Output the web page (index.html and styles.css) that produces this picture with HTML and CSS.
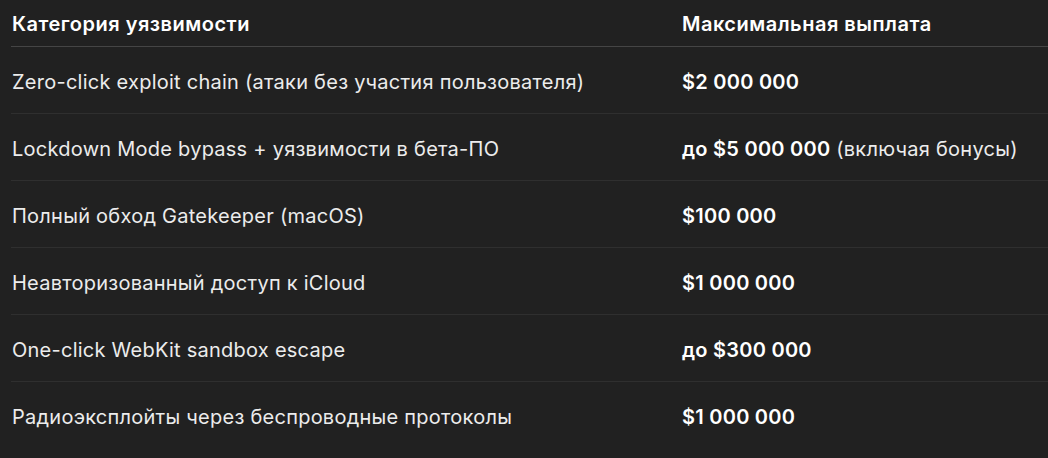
FILE: index.html
```html
<!DOCTYPE html>
<html lang="ru">
<head>
<meta charset="utf-8">
<link rel="stylesheet" href="styles.css">
</head>
<body>
<div class="table">
  <div class="row head">
    <div class="cell c1">Категория уязвимости</div>
    <div class="cell c2">Максимальная выплата</div>
  </div>
  <div class="row">
    <div class="cell c1">Zero-click exploit chain (атаки без участия пользователя)</div>
    <div class="cell c2"><b>$2 000 000</b></div>
  </div>
  <div class="row">
    <div class="cell c1">Lockdown Mode bypass + уязвимости в бета-ПО</div>
    <div class="cell c2"><b>до $5 000 000</b> (включая бонусы)</div>
  </div>
  <div class="row">
    <div class="cell c1">Полный обход Gatekeeper (macOS)</div>
    <div class="cell c2"><b>$100 000</b></div>
  </div>
  <div class="row">
    <div class="cell c1">Неавторизованный доступ к iCloud</div>
    <div class="cell c2"><b>$1 000 000</b></div>
  </div>
  <div class="row">
    <div class="cell c1">One-click WebKit sandbox escape</div>
    <div class="cell c2"><b>до $300 000</b></div>
  </div>
  <div class="row last">
    <div class="cell c1">Радиоэксплойты через беспроводные протоколы</div>
    <div class="cell c2"><b>$1 000 000</b></div>
  </div>
</div>
</body>
</html>
```
FILE: styles.css
```css
html, body {
  margin: 0;
  background: #212121;
}
body {
  padding-left: 11px;
  font-family: Inter, "Noto Sans", sans-serif;
  font-size: 20px;
  letter-spacing: 0.25px;
  color: #ececec;
  overflow: hidden;
}
.table {
  display: flex;
  flex-direction: column;
}
.row {
  display: grid;
  grid-template-columns: 670px 1fr;
  border-bottom: 1px solid #2f2f2f;
}
.row.last {
  border-bottom: none;
}
.cell {
  padding: 21px 0 17px 1px;
  line-height: 28px;
  white-space: nowrap;
}
.head {
  border-bottom-color: #454545;
}
.head .cell {
  padding-top: 10px;
  padding-bottom: 8px;
  font-weight: 600;
  letter-spacing: 0.5px;
  color: #ffffff;
}
b {
  font-weight: 600;
  color: #ffffff;
}
```
